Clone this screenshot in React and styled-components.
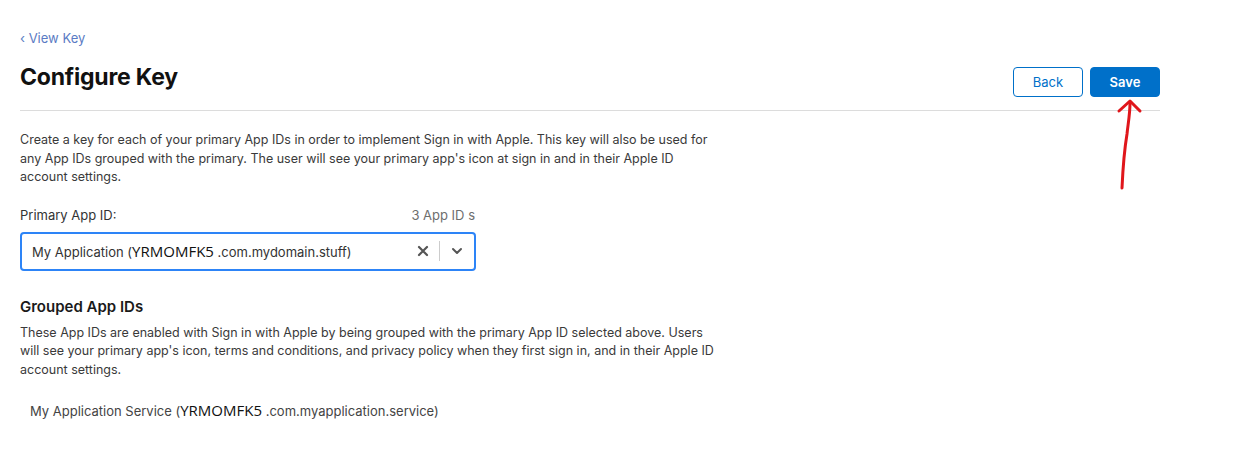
import React from "react"
import styled, { createGlobalStyle } from "styled-components"

const GlobalStyle = createGlobalStyle`
  body {
    margin: 0;
    background: #ffffff;
    font-family: Inter, "Liberation Sans", Arial, sans-serif;
    color: #333333;
  }
`

const Page = styled.div`
  position: relative;
  width: 1140px;
  padding: 27px 0 0 20px;
`

const BackLink = styled.a`
  display: inline-block;
  color: #5b7bc4;
  font-size: 13px;
  text-decoration: none;
  margin-bottom: 11px;
`

const HeaderRow = styled.div`
  display: flex;
  justify-content: space-between;
  align-items: center;
  padding-bottom: 13px;
  border-bottom: 1px solid #dcdcdc;
`

const Title = styled.h1`
  margin: 0;
  font-size: 23px;
  font-weight: 700;
  color: #111111;
  letter-spacing: -0.2px;
`

const Buttons = styled.div`
  display: flex;
  gap: 7px;
  margin-top: 10px;
`

const Button = styled.button`
  width: 70px;
  height: 30px;
  border-radius: 4px;
  font-family: Inter, "Liberation Sans", sans-serif;
  font-size: 13px;
  font-weight: ${p => (p.primary ? 600 : 400)};
  border: 1px solid #0070c9;
  background: ${p => (p.primary ? "#0070c9" : "#ffffff")};
  color: ${p => (p.primary ? "#ffffff" : "#0070c9")};
`

const Text = styled.p`
  margin: 0;
  width: 700px;
  font-size: 12.5px;
  line-height: 18.5px;
  color: #3a3a3a;
`

const Intro = styled(Text)`
  margin-top: 20px;
`

const FieldHead = styled.div`
  display: flex;
  justify-content: space-between;
  width: 455px;
  margin-top: 20px;
  font-size: 13px;
`

const Label = styled.span`
  color: #333333;
`

const Count = styled.span`
  color: #6e6e6e;
`

const Select = styled.div`
  box-sizing: border-box;
  display: flex;
  align-items: center;
  width: 456px;
  height: 39px;
  margin-top: 9px;
  padding: 0 10px;
  border: 2px solid #2d84f7;
  border-radius: 4px;
  font-size: 13px;
  color: #333333;
`

const Value = styled.span`
  flex: 1;
`

const Code = styled.span`
  font-family: "Open Sans", "DejaVu Sans", sans-serif;
  font-size: 15px;
  color: #111111;
`

const Controls = styled.div`
  display: flex;
  align-items: center;
  gap: 10px;
`

const Sep = styled.span`
  width: 1px;
  height: 20px;
  background: #cccccc;
`

const SectionTitle = styled.h2`
  margin: 26px 0 8px;
  font-size: 15px;
  font-weight: 600;
  color: #1a1a1a;
`

const ServiceRow = styled.div`
  margin-top: 21px;
  padding-left: 10px;
  font-size: 13px;
  color: #444444;
`

const Arrow = styled.svg`
  position: absolute;
  left: 1108px;
  top: 94px;
`

const App = () => (
  <>
    <GlobalStyle />
    <Page>
      <BackLink href="#">‹ View Key</BackLink>
      <HeaderRow>
        <Title>Configure Key</Title>
        <Buttons>
          <Button>Back</Button>
          <Button primary>Save</Button>
        </Buttons>
      </HeaderRow>
      <Intro>
        Create a key for each of your primary App IDs in order to implement Sign in with Apple. This key will also be used for any App IDs grouped with the primary. The user will see your primary app's icon at sign in and in their Apple ID account settings.
      </Intro>
      <FieldHead>
        <Label>Primary App ID:</Label>
        <Count>3 App ID s</Count>
      </FieldHead>
      <Select>
        <Value>
          My Application (<Code>YRMOMFK5</Code> .com.mydomain.stuff)
        </Value>
        <Controls>
          <svg width="12" height="12" viewBox="0 0 12 12">
            <path d="M2 2 L10 10 M10 2 L2 10" stroke="#555" strokeWidth="2.2" strokeLinecap="round" />
          </svg>
          <Sep />
          <svg width="14" height="14" viewBox="0 0 14 14">
            <path d="M3 5 L7 9 L11 5" stroke="#555" strokeWidth="2" fill="none" strokeLinecap="round" strokeLinejoin="round" />
          </svg>
        </Controls>
      </Select>
      <SectionTitle>Grouped App IDs</SectionTitle>
      <Text>
        These App IDs are enabled with Sign in with Apple by being grouped with the primary App ID selected above. Users will see your primary app's icon, terms and conditions, and privacy policy when they first sign in, and in their Apple ID account settings.
      </Text>
      <ServiceRow>
        My Application Service (<Code>YRMOMFK5</Code> .com.myapplication.service)
      </ServiceRow>
      <Arrow width="40" height="100" viewBox="0 0 40 100">
        <path d="M14 94 C15 72 17 52 19 40 C20 30 22 20 22 9" stroke="#e0161b" strokeWidth="3" fill="none" strokeLinecap="round" />
        <path d="M11 17 L22 7 L32 17" stroke="#e0161b" strokeWidth="3" fill="none" strokeLinecap="round" strokeLinejoin="round" />
      </Arrow>
    </Page>
  </>
)

export default App
